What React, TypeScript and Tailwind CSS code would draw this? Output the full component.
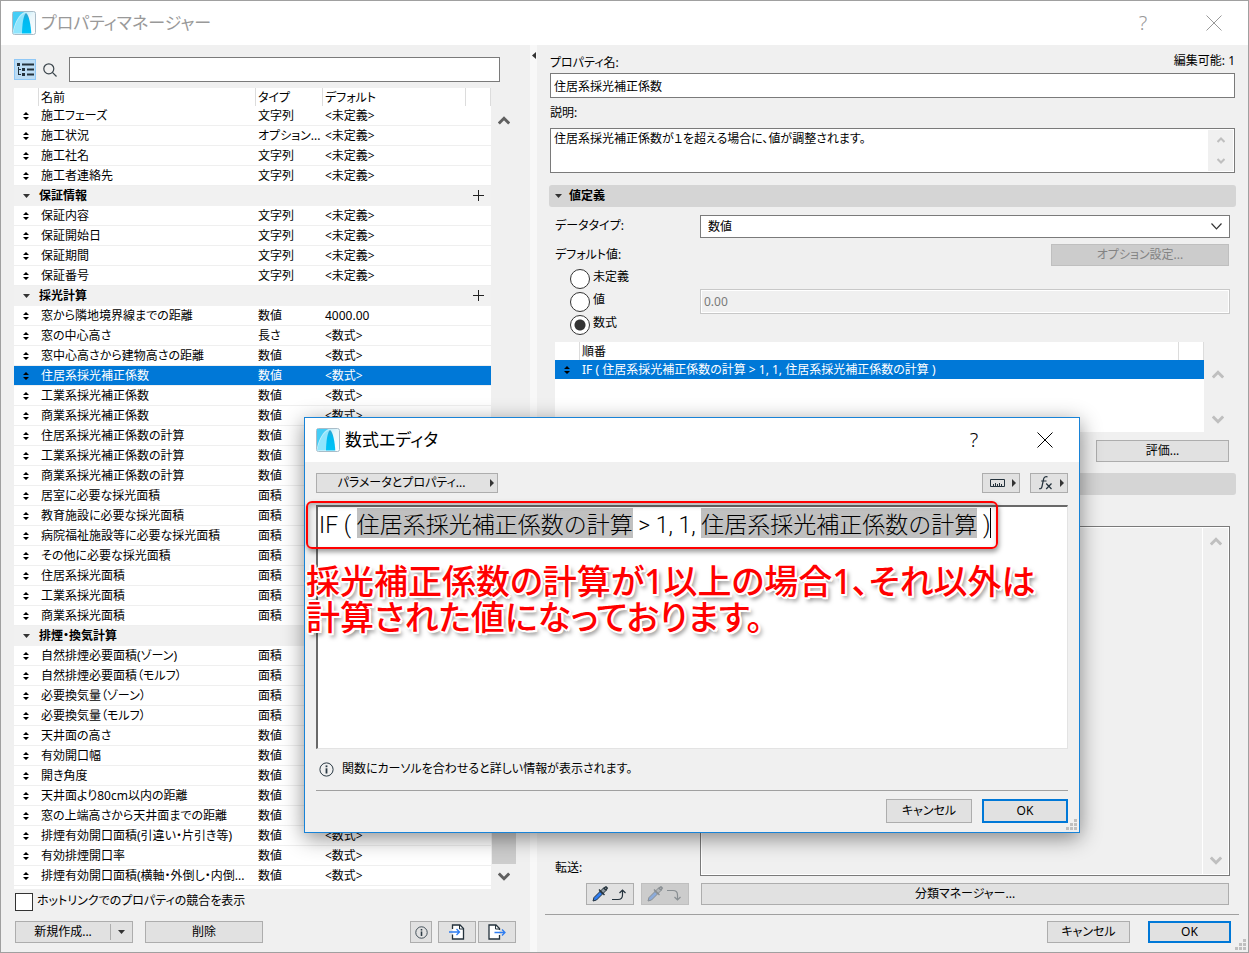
import React from "react";

type Row = { name: string; type?: string; value?: string; group?: boolean };

const UNDEF = "<未定義>";
const EXPR = "<数式>";

const ROWS: Row[] = [
  { name: "施工フェーズ", type: "文字列", value: UNDEF },
  { name: "施工状況", type: "オプション...", value: UNDEF },
  { name: "施工社名", type: "文字列", value: UNDEF },
  { name: "施工者連絡先", type: "文字列", value: UNDEF },
  { name: "保証情報", group: true },
  { name: "保証内容", type: "文字列", value: UNDEF },
  { name: "保証開始日", type: "文字列", value: UNDEF },
  { name: "保証期間", type: "文字列", value: UNDEF },
  { name: "保証番号", type: "文字列", value: UNDEF },
  { name: "採光計算", group: true },
  { name: "窓から隣地境界線までの距離", type: "数値", value: "4000.00" },
  { name: "窓の中心高さ", type: "長さ", value: EXPR },
  { name: "窓中心高さから建物高さの距離", type: "数値", value: EXPR },
  { name: "住居系採光補正係数", type: "数値", value: EXPR },
  { name: "工業系採光補正係数", type: "数値", value: EXPR },
  { name: "商業系採光補正係数", type: "数値", value: EXPR },
  { name: "住居系採光補正係数の計算", type: "数値" },
  { name: "工業系採光補正係数の計算", type: "数値" },
  { name: "商業系採光補正係数の計算", type: "数値" },
  { name: "居室に必要な採光面積", type: "面積" },
  { name: "教育施設に必要な採光面積", type: "面積" },
  { name: "病院福祉施設等に必要な採光面積", type: "面積" },
  { name: "その他に必要な採光面積", type: "面積" },
  { name: "住居系採光面積", type: "面積" },
  { name: "工業系採光面積", type: "面積" },
  { name: "商業系採光面積", type: "面積" },
  { name: "排煙・換気計算", group: true },
  { name: "自然排煙必要面積(ゾーン)", type: "面積" },
  { name: "自然排煙必要面積（モルフ）", type: "面積" },
  { name: "必要換気量（ゾーン）", type: "面積" },
  { name: "必要換気量（モルフ）", type: "面積" },
  { name: "天井面の高さ", type: "数値" },
  { name: "有効開口幅", type: "数値" },
  { name: "開き角度", type: "数値" },
  { name: "天井面より80cm以内の距離", type: "数値" },
  { name: "窓の上端高さから天井面までの距離", type: "数値" },
  { name: "排煙有効開口面積(引違い・片引き等)", type: "数値", value: EXPR },
  { name: "有効排煙開口率", type: "数値", value: EXPR },
  { name: "排煙有効開口面積(横軸・外倒し・内倒...", type: "数値", value: EXPR },
];

const SELECTED = "住居系採光補正係数";

const BTN = "border border-[#adadad] bg-[#e1e1e1] flex items-center justify-center";
const BTN_OFF = "border border-[#bfbfbf] bg-[#cccccc] text-[#838383] flex items-center justify-center";
const BTN_MAIN = "border-2 border-[#0078d7] bg-[#e1e1e1] flex items-center justify-center";

function Logo() {
  return (
    <svg className="size-6 shrink-0" viewBox="0 0 24 24" aria-hidden="true">
      <defs>
        <linearGradient id="tile" x1="0" y1="0" x2="1" y2="1">
          <stop offset="0" stopColor="#7fe0fb" />
          <stop offset="0.5" stopColor="#e8f6fb" />
          <stop offset="1" stopColor="#ffffff" />
        </linearGradient>
        <linearGradient id="arch" x1="0" y1="0" x2="0" y2="1">
          <stop offset="0" stopColor="#3a9fc8" />
          <stop offset="0.35" stopColor="#00b9f0" />
          <stop offset="1" stopColor="#00c3f7" />
        </linearGradient>
      </defs>
      <rect x="0.5" y="0.5" width="23" height="23" rx="2" fill="url(#tile)" stroke="#a9bcc8" />
      <path d="M1 20V1H12.500C7 3 3 11 1 20Z" fill="#45cdf6" />
      <path d="M1 22.500C3 12 8 3 14 2C11.500 8 10.500 15 10 22.500Z" fill="#8fe5fd" />
      <path d="M10 22.500C10 14 11.500 3.500 14 2C17 4 18.800 14 19.300 22.500Z" fill="url(#arch)" />
    </svg>
  );
}

function CloseIcon() {
  return (
    <svg className="size-4" viewBox="0 0 16 16" stroke="currentColor" fill="none" aria-hidden="true">
      <path d="M0.500 0.500 15.500 15.500M15.500 0.500 0.500 15.500" />
    </svg>
  );
}

function SortHandle() {
  return (
    <svg className="mx-auto h-2 w-1.5" viewBox="0 0 6 8" fill="currentColor" aria-hidden="true">
      <path d="M3 0 6 3H0ZM3 8 0 5H6Z" />
    </svg>
  );
}

function DownTriangle() {
  return (
    <svg className="h-1 w-[7px] shrink-0" viewBox="0 0 7 4" fill="#333" aria-hidden="true">
      <path d="M0 0H7L3.500 4Z" />
    </svg>
  );
}

function RightTriangle() {
  return (
    <svg className="h-2 w-1 shrink-0" viewBox="0 0 4 8" fill="#333" aria-hidden="true">
      <path d="M0 0V8L4 4Z" />
    </svg>
  );
}

function Chevron({ down = false, small = false, color }: { down?: boolean; small?: boolean; color: string }) {
  return (
    <svg
      className={small ? "h-[6px] w-2" : "h-[9px] w-3"}
      viewBox="0 0 12 9"
      fill="none"
      stroke={color}
      strokeWidth="3"
      aria-hidden="true"
    >
      <path d={down ? "M0.800 1.500 6 6.700 11.200 1.500" : "M0.800 7.500 6 2.300 11.200 7.500"} />
    </svg>
  );
}

function InfoIcon({ className }: { className: string }) {
  return (
    <svg className={className} viewBox="0 0 15 15" fill="none" stroke="#2b3a44" aria-hidden="true">
      <circle cx="7.500" cy="7.500" r="6.600" />
      <path d="M7.500 6.300V11.500" strokeWidth="1.800" />
      <path d="M7.500 3.400V5.200" strokeWidth="1.800" />
    </svg>
  );
}

function Grip() {
  return (
    <svg className="size-[11px]" viewBox="0 0 11 11" fill="#bfbfbf" aria-hidden="true">
      <path d="M8 0h3v3H8zM4 4h3v3H4zM8 4h3v3H8zM0 8h3v3H0zM4 8h3v3H4zM8 8h3v3H8z" />
    </svg>
  );
}

function PropertyList() {
  return (
    <div className="flex">
      <div className="min-w-0 flex-1 bg-white pb-[3px]">
        <table className="w-full table-fixed border-separate border-spacing-0 text-left">
          <colgroup>
            <col className="w-6" />
            <col />
            <col className="w-[67px]" />
            <col className="w-[143px]" />
            <col className="w-[26px]" />
          </colgroup>
          <thead>
            <tr className="h-[18px] leading-4">
              <th className="p-0" />
              <th className="border-l border-[#dcdcdc] p-0 pt-0.5 pl-0.5 font-normal">名前</th>
              <th className="border-l border-[#dcdcdc] p-0 pt-0.5 pl-0.5 font-normal">タイプ</th>
              <th className="border-l border-[#dcdcdc] p-0 pt-0.5 pl-0.5 font-normal">デフォルト</th>
              <th className="border-x border-[#dcdcdc] p-0" />
            </tr>
          </thead>
          <tbody className="leading-[19px]">
            {ROWS.map((r) =>
              r.group ? (
                <tr key={r.name} className="h-5 bg-[#f1f1f1]">
                  <td className="h-5 border-b border-[#f1f1f1] p-0">
                    <div className="flex justify-center">
                      <DownTriangle />
                    </div>
                  </td>
                  <td colSpan={3} className="border-b border-[#f1f1f1] p-0 pl-px font-bold">
                    {r.name}
                  </td>
                  <td className="border-b border-[#f1f1f1] p-0">
                    <button type="button" aria-label="追加" className="flex w-full justify-center">
                      <svg className="size-[11px]" viewBox="0 0 11 11" stroke="#222" aria-hidden="true">
                        <path d="M5.500 0V11M0 5.500H11" />
                      </svg>
                    </button>
                  </td>
                </tr>
              ) : (
                <tr key={r.name} className={r.name === SELECTED ? "h-5 bg-[#0078d7] text-white" : "h-5"}>
                  <td className="h-5 border-b border-[#efefef] p-0 text-black">
                    <SortHandle />
                  </td>
                  <td className="border-b border-[#efefef] p-0 pl-[3px] whitespace-nowrap">{r.name}</td>
                  <td className="border-b border-[#efefef] p-0 pl-[3px] whitespace-nowrap">{r.type}</td>
                  <td className="border-b border-[#efefef] p-0 pl-[3px]">{r.value}</td>
                  <td className="border-b border-[#efefef] p-0" />
                </tr>
              )
            )}
          </tbody>
        </table>
      </div>
      <div className="flex w-[25px] flex-col items-center pt-7 pb-2">
        <Chevron color="#606060" />
        <div className="mt-[300px] mb-2 w-6 flex-1 bg-[#cdcdcd]" />
        <Chevron down color="#606060" />
      </div>
    </div>
  );
}

function LeftPanel() {
  return (
    <section className="flex w-[529px] shrink-0 flex-col pt-3 pr-3.5 pl-[13px]">
      <div className="mb-1.5 flex h-[25px] items-center pr-4">
        <button
          type="button"
          aria-label="ツリー表示"
          className="flex h-[21px] w-[22px] items-center justify-center border border-[#90c8f6] bg-[#bcdcf4]"
        >
          <svg className="h-[13px] w-[17px]" viewBox="0 0 17 13" fill="#24323c" aria-hidden="true">
            <path d="M0 0h3v3H0zM5 0.500h12v2H5zM5 5h3v3H5zM10 5.500H17v2H10zM5 10h3v3H5zM10 10.500H17v2H10zM1 4h1v2h2v1H2v4h2v1H1z" />
          </svg>
        </button>
        <button type="button" aria-label="検索" className="ml-1.5 flex size-4 items-center justify-center">
          <svg className="size-3.5" viewBox="0 0 14 14" fill="none" stroke="#3a444b" strokeWidth="1.200" aria-hidden="true">
            <circle cx="5.800" cy="5.800" r="5" />
            <path d="M9.400 9.400 13.500 13.500" />
          </svg>
        </button>
        <input aria-label="検索" className="ml-[11px] h-[25px] min-w-0 flex-1 border border-[#7a7a7a] bg-white px-1 outline-none" />
      </div>
      <PropertyList />
      <label className="mt-1 flex h-[18px] items-center gap-1">
        <input type="checkbox" className="ml-px size-[18px] appearance-none border border-[#333] bg-white" />
        <span className="-mt-0.5 leading-4">ホットリンクでのプロパティの競合を表示</span>
      </label>
      <div className="mt-auto mb-[9px] flex h-[22px] pl-px">
        <div className="flex h-[22px] w-[118px] border border-[#adadad] bg-[#e1e1e1]">
          <button type="button" className="flex flex-1 items-center justify-center">
            新規作成...
          </button>
          <button type="button" aria-label="新規作成メニュー" className="my-0.5 flex w-[22px] items-center justify-center border-l border-[#adadad]">
            <DownTriangle />
          </button>
        </div>
        <button type="button" className={`ml-3 w-[118px] ${BTN}`}>
          削除
        </button>
        <button type="button" aria-label="情報" className={`ml-auto w-[22px] ${BTN}`}>
          <InfoIcon className="size-[13px]" />
        </button>
        <button type="button" aria-label="読み込み" className={`ml-1.5 w-[38px] ${BTN}`}>
          <svg className="h-4 w-4" viewBox="0 0 16 16" fill="none" aria-hidden="true">
            <path d="M3.500 5V1H11L14.500 4.500V15H3.500V10.500" fill="#fff" stroke="#24323c" strokeWidth="1.300" />
            <path d="M10.500 1V5H14.500" stroke="#24323c" />
            <path d="M0 8H10M7.500 5 10.500 8 7.500 11" stroke="#2e7cf0" strokeWidth="1.300" />
          </svg>
        </button>
        <button type="button" aria-label="書き出し" className={`ml-0.5 w-[38px] ${BTN}`}>
          <svg className="h-4 w-[18px]" viewBox="0 0 18 16" fill="none" aria-hidden="true">
            <path d="M11.500 6V4.500L8 1H1V15H11.500V11" fill="#fff" stroke="#24323c" strokeWidth="1.300" />
            <path d="M7.500 1V5H11.500" stroke="#24323c" />
            <path d="M6.500 8.500H17M14 5.500 17 8.500 14 11.500" stroke="#2e7cf0" strokeWidth="1.300" />
          </svg>
        </button>
      </div>
    </section>
  );
}

function SectionHeader({ title }: { title?: string }) {
  return (
    <h2 className="-mx-px flex h-[22px] items-center rounded-[3px] bg-[#d5d5d5] pl-1.5 font-bold">
      <DownTriangle />
      {title && <span className="ml-[7px]">{title}</span>}
    </h2>
  );
}

function Radio({ label, checked = false }: { label: string; checked?: boolean }) {
  return (
    <label className="flex h-[23px] items-center gap-[3px]">
      <input
        type="radio"
        name="default-value"
        defaultChecked={checked}
        className="size-5 appearance-none rounded-full border border-[#333] bg-white checked:bg-[radial-gradient(circle,#333_5px,#fff_6px)]"
      />
      <span className="-mt-1">{label}</span>
    </label>
  );
}

function Eyedropper({ inject = false }: { inject?: boolean }) {
  return (
    <svg className="h-4 w-9" viewBox="0 0 36 16" fill="none" aria-hidden="true" opacity={inject ? 0.4 : 1}>
      <path d="M1 15 2 11.500 8.500 5 11 7.500 4.500 14Z" fill="#2e7cf0" stroke="#24323c" />
      <path d="M8 5.500 11.500 2 14 4.500 10.500 8Z" fill="#8d979e" stroke="#24323c" />
      <path d="M7 3.500 12.500 9M12 2 14 0.800 15.300 2 14 4Z" stroke="#24323c" strokeWidth="1.400" />
      {inject ? (
        <path d="M20 4.500H26Q30.500 4.500 30.500 9V14M27.500 11 30.500 14 33.500 11" stroke="#24323c" strokeWidth="1.200" />
      ) : (
        <path d="M20 13.500H26Q30.500 13.500 30.500 9V4M27.500 7 30.500 4 33.500 7" stroke="#24323c" strokeWidth="1.200" />
      )}
    </svg>
  );
}

function RightPanel() {
  return (
    <section className="flex min-w-0 flex-1 flex-col pt-[7px] pl-2">
      <div className="flex flex-1 flex-col pr-[13px] pl-[5px]">
        <div className="flex h-[21px] items-center justify-between">
          <label htmlFor="prop-name" className="pt-px">
            プロパティ名:
          </label>
          <span className="pb-1">編集可能: 1</span>
        </div>
        <input id="prop-name" defaultValue="住居系採光補正係数" className="h-[25px] border border-[#7a7a7a] bg-white px-[3px] outline-none" />
        <label htmlFor="prop-desc" className="flex h-[30px] items-center">
          説明:
        </label>
        <div className="flex h-[45px] border border-[#7a7a7a] bg-white p-px">
          <textarea
            id="prop-desc"
            defaultValue="住居系採光補正係数が１を超える場合に、値が調整されます。"
            className="flex-1 resize-none overflow-hidden px-0.5 leading-[18px] outline-none"
          />
          <div className="flex w-[25px] flex-col items-center justify-between bg-[#f0f0f0] py-[7px]">
            <Chevron small color="#bfbfbf" />
            <Chevron small down color="#bfbfbf" />
          </div>
        </div>
        <div className="mt-3">
          <SectionHeader title="値定義" />
        </div>
        <div className="mt-2 flex h-[23px] pr-[5px] pl-[5px]">
          <label htmlFor="data-type" className="w-[145px] shrink-0 leading-[22px]">
            データタイプ:
          </label>
          <div className="relative flex min-w-0 flex-1">
            <select id="data-type" className="w-full appearance-none border border-[#7a7a7a] bg-white px-[7px] outline-none">
              <option>数値</option>
            </select>
            <svg className="pointer-events-none absolute top-2 right-2 h-[7px] w-[11px]" viewBox="0 0 11 7" fill="none" stroke="#333" strokeWidth="1.200" aria-hidden="true">
              <path d="M0.500 0.500 5.500 5.800 10.500 0.500" />
            </svg>
          </div>
        </div>
        <div className="mt-1.5 flex h-[22px] items-center justify-between pr-1.5 pl-[5px]">
          <span>デフォルト値:</span>
          <button type="button" disabled className={`h-[22px] w-[178px] ${BTN_OFF}`}>
            オプション設定...
          </button>
        </div>
        <div className="mt-px flex items-center pr-[5px] pl-5">
          <div className="w-[130px] shrink-0">
            <Radio label="未定義" />
            <Radio label="値" />
            <Radio label="数式" checked />
          </div>
          <input aria-label="値" disabled defaultValue="0.00" className="h-[25px] min-w-0 flex-1 border border-[#c8c8c8] bg-[#f0f0f0] px-[3px] text-[#7a7a7a] shadow-[inset_0_0_0_1px_#ffffff]" />
        </div>
        <div className="mt-1.5 flex h-[90px] pl-[5px]">
          <div className="min-w-0 flex-1 bg-white">
            <table className="w-full table-fixed border-separate border-spacing-0 text-left">
              <colgroup>
                <col className="w-6" />
                <col />
                <col className="w-[26px]" />
              </colgroup>
              <thead>
                <tr className="h-[18px] leading-4">
                  <th className="p-0" />
                  <th className="border-l border-[#dcdcdc] p-0 pt-0.5 pl-0.5 font-normal">順番</th>
                  <th className="border-x border-[#dcdcdc] p-0" />
                </tr>
              </thead>
              <tbody>
                <tr className="h-[19px] bg-[#0078d7] leading-[19px] text-white">
                  <td className="p-0 text-black">
                    <SortHandle />
                  </td>
                  <td colSpan={2} className="p-0 pl-[3px]">
                    IF ( 住居系採光補正係数の計算 &gt; 1, 1, 住居系採光補正係数の計算 )
                  </td>
                </tr>
              </tbody>
            </table>
          </div>
          <div className="flex w-[31px] flex-col items-center justify-between pt-7 pr-1 pb-2">
            <Chevron color="#bfbfbf" />
            <Chevron down color="#bfbfbf" />
          </div>
        </div>
        <div className="mt-2 flex justify-end pr-1.5">
          <button type="button" className={`h-[22px] w-[133px] ${BTN}`}>
            評価...
          </button>
        </div>
        <div className="mt-[11px]">
          <SectionHeader />
        </div>
        <div className="mt-[31px] flex flex-1 pr-[5px] pl-[5px]">
          <div className="flex w-[145px] shrink-0 items-end leading-4">転送:</div>
          <div className="flex flex-1 border border-[#7a7a7a] p-px shadow-[inset_0_0_0_1px_#ffffff]">
            <div className="flex-1" />
            <div className="flex w-[26px] flex-col items-center justify-between border-l border-white pt-[9px] pb-[9px]">
              <Chevron color="#bfbfbf" />
              <Chevron down color="#bfbfbf" />
            </div>
          </div>
        </div>
        <div className="mt-[7px] flex h-[22px] pr-1.5 pl-9">
          <button type="button" aria-label="設定を取得" className={`w-12 ${BTN}`}>
            <Eyedropper />
          </button>
          <button type="button" aria-label="設定を適用" disabled className={`ml-[7px] w-12 ${BTN_OFF}`}>
            <Eyedropper inject />
          </button>
          <button type="button" className={`ml-3 flex-1 ${BTN}`}>
            分類マネージャー...
          </button>
        </div>
      </div>
      <div className="mt-[9px] mr-[9px] flex border-t border-[#a0a0a0] pt-1.5 pb-[9px]">
        <button type="button" className={`ml-auto h-[22px] w-[83px] ${BTN}`}>
          キャンセル
        </button>
        <button type="button" className={`mr-2 ml-[18px] h-[22px] w-[83px] ${BTN_MAIN}`}>
          OK
        </button>
      </div>
    </section>
  );
}

function FormulaEditor() {
  return (
    <div
      role="dialog"
      aria-label="数式エディタ"
      className="absolute top-[416px] left-[303px] flex h-[416px] w-[776px] flex-col border border-[#1883d7] bg-[#f0f0f0] shadow-[0_5px_20px_rgba(0,0,0,0.45)]"
    >
      <header className="flex h-11 shrink-0 items-center bg-white pl-[11px] text-black">
        <Logo />
        <h2 className="ml-[5px] text-[17px]">数式エディタ</h2>
        <button type="button" aria-label="ヘルプ" className="ml-auto w-[30px] text-xl font-light">
          ?
        </button>
        <button type="button" aria-label="閉じる" className="mr-[26px] ml-12">
          <CloseIcon />
        </button>
      </header>
      <div className="flex flex-1 flex-col px-[11px] pt-[11px]">
        <div className="flex h-5">
          <button type="button" className={`w-[182px] pr-[3px] ${BTN}`}>
            <span className="flex-1 pr-1">パラメータとプロパティ...</span>
            <RightTriangle />
          </button>
          <button type="button" aria-label="単位" className={`ml-auto w-[38px] gap-[7px] pl-1 ${BTN}`}>
            <svg className="h-2 w-[15px]" viewBox="0 0 15 8" fill="none" stroke="#24323c" aria-hidden="true">
              <path d="M0.500 0.500H14.500V7.500H0.500ZM3.500 7V5M5.500 7V4M7.500 7V5M9.500 7V4M11.500 7V5" />
            </svg>
            <RightTriangle />
          </button>
          <button type="button" aria-label="関数" className={`ml-2.5 w-[38px] gap-2 pl-1 ${BTN}`}>
            <svg className="h-3.5 w-[13px]" viewBox="0 0 13 14" fill="none" stroke="#24323c" strokeWidth="1.200" aria-hidden="true">
              <path d="M0 12.500Q2.300 13.500 3 10.500L4.600 3Q5.300 0 8.500 0.900M2.200 5H7.500M7.200 7.500 12.500 13M12.500 7.500 7.200 13" />
            </svg>
            <RightTriangle />
          </button>
        </div>
        <div
          role="textbox"
          aria-label="数式"
          contentEditable
          suppressContentEditableWarning
          className="mt-3 h-[244px] border border-t-2 border-l-2 border-[#e3e3e3] border-t-[#696969] border-l-[#696969] bg-white px-px pt-px font-['Roboto','Noto_Sans_CJK_JP',sans-serif] text-[23px] leading-[30px] font-light whitespace-nowrap text-black outline-none [font-feature-settings:normal]"
        >
          IF ( <span className="inline-block h-[30px] bg-[#c0c0c0] leading-9">住居系採光補正係数の計算</span> &gt; 1, 1,{" "}
          <span className="inline-block h-[30px] bg-[#c0c0c0] leading-9">住居系採光補正係数の計算</span> )
          <span className="inline-block h-[30px] w-px bg-black align-top" />
        </div>
        <p className="mt-3 flex h-4 items-center gap-2 pl-[3px]">
          <InfoIcon className="size-[15px]" />
          関数にカーソルを合わせると詳しい情報が表示されます。
        </p>
        <div className="mt-[13px] flex border-t border-[#a0a0a0] pt-2">
          <button type="button" className={`ml-auto h-6 w-[86px] ${BTN}`}>
            キャンセル
          </button>
          <button type="button" className={`ml-2.5 h-6 w-[86px] ${BTN_MAIN}`}>
            OK
          </button>
        </div>
      </div>
      <div className="absolute right-0.5 bottom-0.5">
        <Grip />
      </div>
      <div className="pointer-events-none absolute top-[83px] left-px h-12 w-[692px] rounded-md border-2 border-[#f00] shadow-[1px_3px_5px_rgba(0,0,0,0.4),inset_1px_3px_5px_rgba(0,0,0,0.25)]" />
      <p className="pointer-events-none absolute top-[145px] left-px text-[34px] leading-9 font-medium whitespace-nowrap text-[#f00] [text-shadow:-2px_0_#fff,2px_0_#fff,0_-2px_#fff,0_2px_#fff,-1px_-1px_#fff,1px_-1px_#fff,-1px_1px_#fff,2px_2px_#fff,3px_4px_4px_rgba(0,0,0,0.5)]">
        採光補正係数の計算が1以上の場合1、それ以外は
        <br />
        計算された値になっております。
      </p>
    </div>
  );
}

export default function App() {
  return (
    <div className="relative flex min-h-screen flex-col border border-[#a0a0a0] bg-[#f0f0f0] font-['Noto_Sans','Noto_Sans_CJK_JP',sans-serif] text-xs text-black [font-feature-settings:'palt']">
      <header className="flex h-11 shrink-0 items-center bg-white pl-[11px] text-[#999]">
        <Logo />
        <h1 className="ml-[5px] text-[17px]">プロパティマネージャー</h1>
        <button type="button" aria-label="ヘルプ" className="ml-auto w-[30px] text-xl font-light">
          ?
        </button>
        <button type="button" aria-label="閉じる" className="mr-[26px] ml-12">
          <CloseIcon />
        </button>
      </header>
      <main className="flex flex-1">
        <LeftPanel />
        <div className="flex w-[7px] shrink-0 justify-center bg-[#f8f8f8] pt-[7px]">
          <svg className="h-[7px] w-1" viewBox="0 0 4 7" fill="#333" aria-hidden="true">
            <path d="M4 0V7L0 3.500Z" />
          </svg>
        </div>
        <RightPanel />
      </main>
      <div className="absolute right-0.5 bottom-0.5">
        <Grip />
      </div>
      <FormulaEditor />
    </div>
  );
}
